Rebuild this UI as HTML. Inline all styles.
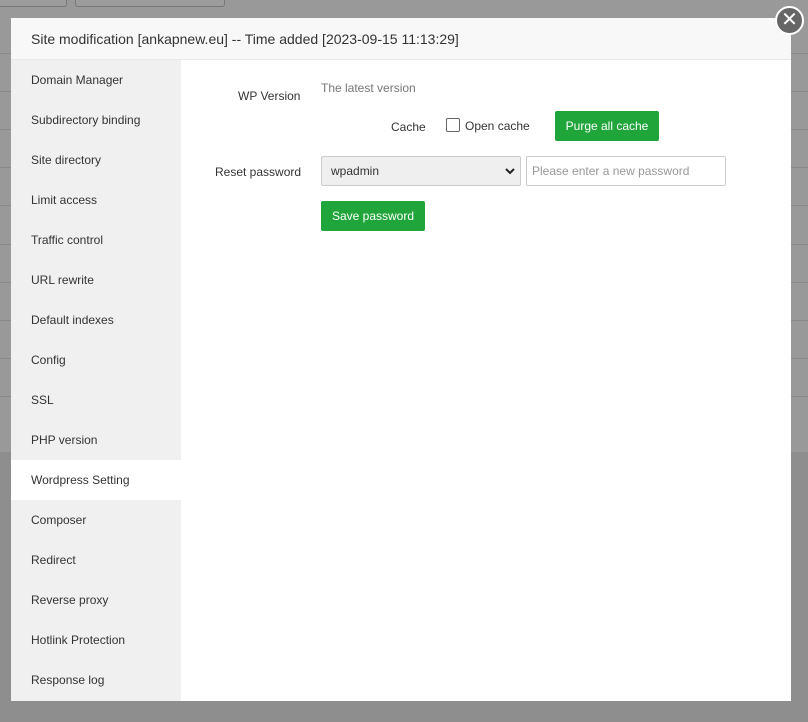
<!DOCTYPE html>
<html><head><style>
*{box-sizing:border-box;margin:0;padding:0}
body{width:808px;height:722px;overflow:hidden;background:#8e8e8e;font-family:"Liberation Sans",sans-serif;position:relative}
.bgtop{position:absolute;left:0;top:0;width:808px;height:452px;background:#999}
.ln{position:absolute;left:0;width:808px;height:1px;background:#888}
.tb{position:absolute;top:-2px;height:9px;border:1px solid #777;border-top:none;border-radius:0 0 3px 3px;background:#9c9c9c}
.modal{position:absolute;left:11px;top:18px;width:780px;height:683px;background:#fff}
.hd{height:42px;background:#f8f8f8;border-bottom:1px solid #e8e8e8;font-size:14px;color:#333;padding:13px 20px}
.side{position:absolute;left:0;top:42px;width:170px;height:641px;background:#f0f0f0}
.side div{height:40px;line-height:40px;padding-left:20px;font-size:12px;color:#333}
.side .on{background:#fff}
.lbl{position:absolute;font-size:12px;color:#333}
.btn{position:absolute;background:#20a53a;color:#fff;font-size:12px;border-radius:2px;text-align:center}
.close{position:absolute;left:775px;top:6px;width:29px;height:29px;border-radius:50%;background:#666;border:2px solid #fff;color:#fff;font-size:20px;line-height:24px;text-align:center}
</style></head><body>
<div class="bgtop"></div>
<div class="ln" style="top:53px"></div><div class="ln" style="top:91px"></div><div class="ln" style="top:129px"></div><div class="ln" style="top:167px"></div><div class="ln" style="top:205px"></div><div class="ln" style="top:244px"></div><div class="ln" style="top:282px"></div><div class="ln" style="top:320px"></div><div class="ln" style="top:358px"></div><div class="ln" style="top:396px"></div>
<div class="tb" style="left:-5px;width:72px"></div><div class="tb" style="left:75px;width:150px"></div>
<div class="modal">
<div class="hd">Site modification [ankapnew.eu] -- Time added [2023-09-15 11:13:29]</div>
<div class="side">
<div>Domain Manager</div><div>Subdirectory binding</div><div>Site directory</div><div>Limit access</div><div>Traffic control</div><div>URL rewrite</div><div>Default indexes</div><div>Config</div><div>SSL</div><div>PHP version</div><div class="on">Wordpress Setting</div><div>Composer</div><div>Redirect</div><div>Reverse proxy</div><div>Hotlink Protection</div><div>Response log</div>
</div>
<div class="lbl" style="left:227px;top:71px">WP Version</div>
<div class="lbl" style="left:310px;top:63px;color:#777">The latest version</div>
<div class="lbl" style="left:380px;top:102px">Cache</div>
<div style="position:absolute;left:435px;top:100px;width:14px;height:14px;border:1px solid #666;border-radius:2px;background:#fff"></div>
<div class="lbl" style="left:454px;top:101px">Open cache</div>
<div class="btn" style="left:544px;top:93px;width:104px;height:30px;line-height:30px">Purge all cache</div>
<div class="lbl" style="left:204px;top:147px">Reset password</div>
<div style="position:absolute;left:310px;top:138px;width:200px;height:30px;background:#efefef;border:1px solid #ccc;border-radius:2px;font-size:12px;color:#333;padding:7px 9px">wpadmin<svg style="position:absolute;right:5px;top:11px" width="10" height="7" viewBox="0 0 10 7"><path d="M1 1l4 4 4-4" stroke="#222" stroke-width="2" fill="none"/></svg></div>
<div style="position:absolute;left:515px;top:138px;width:200px;height:30px;border:1px solid #ccc;border-radius:2px;font-size:12px;color:#999;padding:7px 5px">Please enter a new password</div>
<div class="btn" style="left:310px;top:183px;width:104px;height:30px;line-height:30px">Save password</div>
</div>
<div class="close">✕</div>
</body></html>
